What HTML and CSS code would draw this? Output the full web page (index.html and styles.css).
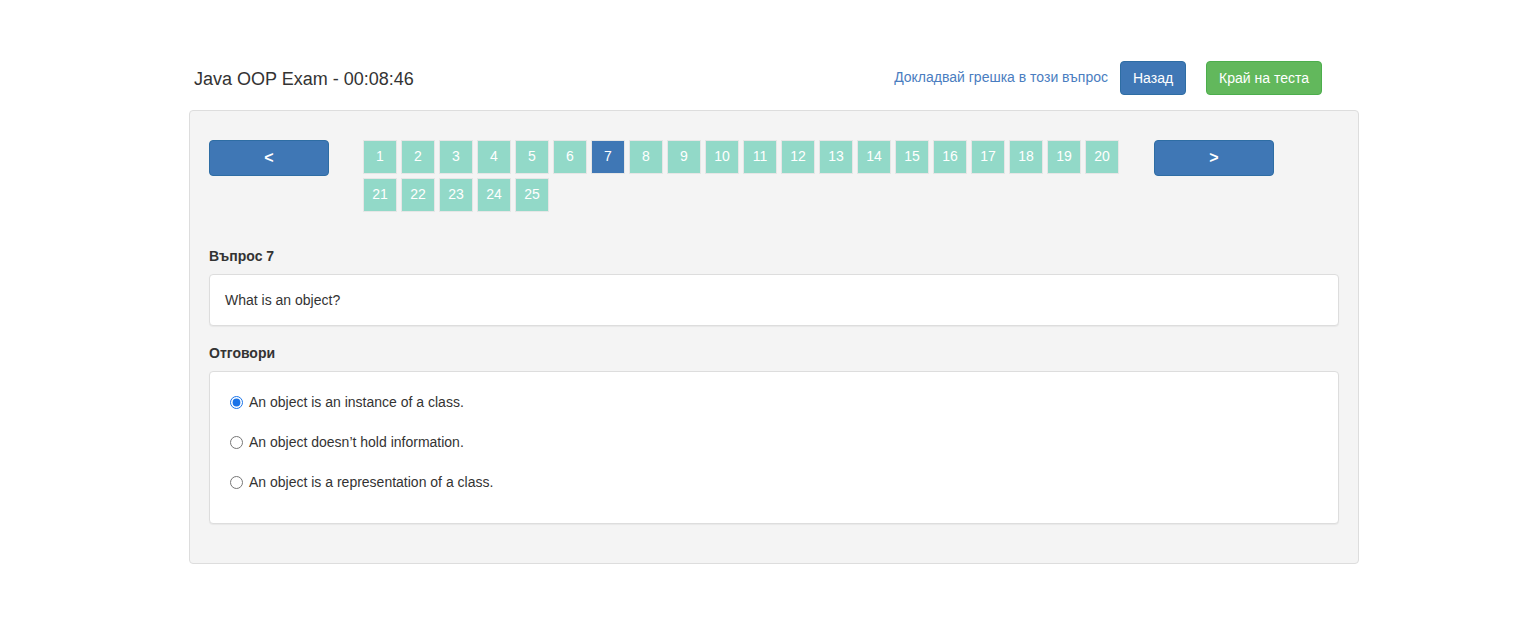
FILE: index.html
```html
<!DOCTYPE html>
<html>
<head>
<meta charset="utf-8">
<link rel="stylesheet" href="styles.css">
</head>
<body>
<div class="container">
  <div class="header">
    <h3 class="title">Java OOP Exam - 00:08:46</h3>
    <div class="actions">
      <a class="report" href="#">Докладвай грешка в този въпрос</a>
      <button class="btn btn-primary back">Назад</button>
      <button class="btn btn-success end">Край на теста</button>
    </div>
  </div>
  <div class="panel">
    <div class="nav">
      <button class="btn btn-primary arrow">&lt;</button>
      <div class="tiles">
        <span class="tile">1</span><span class="tile">2</span><span class="tile">3</span><span class="tile">4</span><span class="tile">5</span><span class="tile">6</span><span class="tile active">7</span><span class="tile">8</span><span class="tile">9</span><span class="tile">10</span><span class="tile">11</span><span class="tile">12</span><span class="tile">13</span><span class="tile">14</span><span class="tile">15</span><span class="tile">16</span><span class="tile">17</span><span class="tile">18</span><span class="tile">19</span><span class="tile">20</span><span class="tile">21</span><span class="tile">22</span><span class="tile">23</span><span class="tile">24</span><span class="tile">25</span>
      </div>
      <button class="btn btn-primary arrow">&gt;</button>
    </div>
    <div class="label">Въпрос 7</div>
    <div class="box question">What is an object?</div>
    <div class="label">Отговори</div>
    <div class="box answers">
      <label class="answer"><input type="radio" name="a" checked> An object is an instance of a class.</label>
      <label class="answer"><input type="radio" name="a"> An object doesn’t hold information.</label>
      <label class="answer"><input type="radio" name="a"> An object is a representation of a class.</label>
    </div>
  </div>
</div>
</body>
</html>
```
FILE: styles.css
```css
* { box-sizing: border-box; }
html, body { margin: 0; padding: 0; background: #fff; }
body {
  font-family: "Liberation Sans", Arial, sans-serif;
  font-size: 14px;
  color: #333;
  line-height: 1.42857;
}
.container {
  width: 1170px;
  margin-left: 189px;
  padding-top: 61px;
}
.header {
  display: flex;
  align-items: center;
  justify-content: space-between;
  height: 34px;
  margin-bottom: 15px;
  padding-left: 5px;
  padding-right: 37px;
}
.title {
  margin: 0;
  padding-top: 3px;
  font-size: 18px;
  font-weight: normal;
  color: #333;
}
.actions {
  display: flex;
  align-items: center;
}
.report {
  color: #4a7dc0;
  text-decoration: none;
  font-size: 14px;
  margin-right: 12px;
}
.btn {
  font-family: inherit;
  font-size: 14px;
  color: #fff;
  border: 1px solid transparent;
  border-radius: 4px;
  height: 34px;
  padding: 6px 12px;
  cursor: pointer;
}
.btn-primary { background: #3f77b5; border-color: #2e6da4; }
.btn-success { background: #62b85c; border-color: #4cae4c; }
.back { width: 66px; margin-right: 20px; }
.end { width: 116px; }
.panel {
  background: #f4f4f4;
  border: 1px solid #ddd;
  border-radius: 4px;
  padding: 29px 19px 39px 19px;
}
.nav {
  display: flex;
  align-items: flex-start;
  margin-bottom: 34px;
}
.arrow {
  width: 120px;
  height: 36px;
  font-weight: bold;
  font-size: 16px;
  padding: 0;
}
.tiles {
  width: 772px;
  margin-left: 34px;
  margin-right: 19px;
  display: flex;
  flex-wrap: wrap;
  gap: 4px;
}
.tile {
  width: 34px;
  height: 34px;
  background: #92d9c8;
  border: 1px solid #e6e6e6;
  color: #fff;
  display: flex;
  align-items: center;
  justify-content: center;
  font-size: 14px;
}
.tile.active { background: #3f77b5; }
.label {
  font-weight: bold;
  font-size: 14px;
  line-height: 20px;
  margin-bottom: 8px;
}
.box {
  background: #fff;
  border: 1px solid #ddd;
  border-radius: 4px;
  box-shadow: 0 1px 1px rgba(0,0,0,0.05);
}
.question {
  height: 52px;
  padding: 15px;
  line-height: 20px;
  margin-bottom: 17px;
}
.answers {
  height: 153px;
  padding: 21px 20px;
  display: flex;
  flex-direction: column;
}
.answer {
  display: flex;
  align-items: center;
  height: 20px;
  margin-bottom: 20px;
  cursor: pointer;
}
.answer input {
  margin: 0 6px 0 0;
  width: 13px;
  height: 13px;
  accent-color: #1a73e8;
}
```
